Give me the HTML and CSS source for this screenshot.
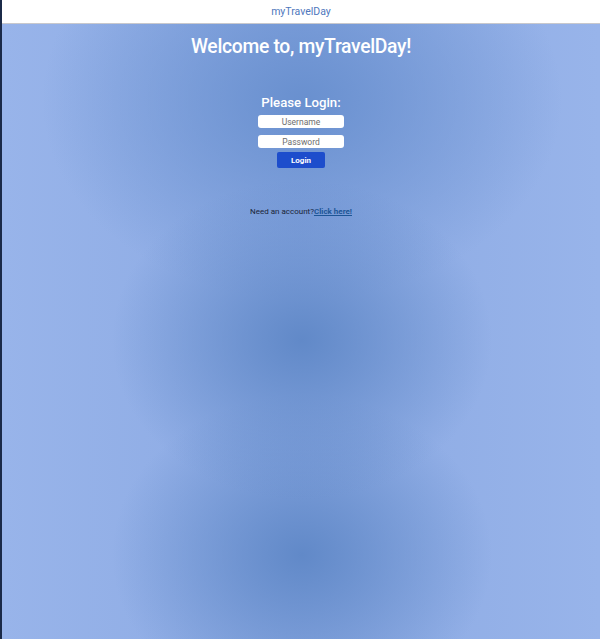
FILE: index.html
```html
<!DOCTYPE html>
<html>
<head>
<meta charset="utf-8">
<link rel="stylesheet" href="styles.css">
</head>
<body>
<div class="page">
  <header class="topbar"><span class="brand">myTravelDay</span></header>
  <main class="hero">
    <h1 class="title">Welcome to, myTravelDay!</h1>
    <form class="login">
      <h2 class="login-title">Please Login:</h2>
      <input class="field" type="text" placeholder="Username">
      <input class="field" type="password" placeholder="Password">
      <button class="btn" type="button">Login</button>
    </form>
    <p class="signup">Need an account?<a href="#" class="signup-link">Click here!</a></p>
  </main>
</div>
</body>
</html>
```
FILE: styles.css
```css
html, body {
  margin: 0;
  padding: 0;
  height: 100%;
}
body {
  font-family: Roboto, "Liberation Sans", sans-serif;
  background: #1b2a48;
}
.page {
  margin-left: 2px;
  height: 639px;
  display: flex;
  flex-direction: column;
  background-color: #98b4ea;
  background-image:
    radial-gradient(ellipse 190px 160px at 300px 340px, #6189c8 0%, rgba(97,137,200,0.6) 40%, rgba(152,180,234,0) 100%),
    radial-gradient(ellipse 190px 160px at 300px 555px, #6189c8 0%, rgba(97,137,200,0.6) 40%, rgba(152,180,234,0) 100%),
    radial-gradient(ellipse 260px 200px at 300px 100px, #6990cf 0%, rgba(105,144,207,0.6) 40%, rgba(152,180,234,0) 100%),
    linear-gradient(90deg, rgba(152,180,234,0) 0%, rgba(110,145,210,0.3) 50%, rgba(152,180,234,0) 100%);
  overflow: hidden;
}
.topbar {
  height: 23px;
  background: #ffffff;
  border-bottom: 1px solid #c8c8cc;
  display: flex;
  align-items: center;
  justify-content: center;
  margin-left: -2px;
  padding-left: 2px;
}
.brand {
  color: #4f78bd;
  font-size: 10.5px;
}
.hero {
  display: flex;
  flex-direction: column;
  align-items: center;
}
.title {
  margin: 11px 0 0;
  color: #ffffff;
  font-size: 19.3px;
  font-weight: 500;
  letter-spacing: -0.3px;
}
.login {
  display: flex;
  flex-direction: column;
  align-items: center;
  margin-top: 37px;
}
.login-title {
  margin: 0 0 5px;
  color: #ffffff;
  font-size: 13.2px;
  font-weight: 500;
}
.field {
  box-sizing: border-box;
  width: 86px;
  height: 13px;
  margin: 0 0 7px;
  padding: 0;
  border: none;
  border-radius: 3px;
  background: #ffffff;
  font-family: Roboto, "Liberation Sans", sans-serif;
  font-size: 8.5px;
  text-align: center;
  color: #555;
}
.field::placeholder {
  color: #6d6d6d;
}
.field + .field {
  margin-bottom: 4px;
}
.btn {
  box-sizing: border-box;
  width: 48px;
  height: 16px;
  padding: 0;
  border: none;
  border-radius: 2px;
  background: #1d4dcc;
  color: #ffffff;
  font-family: Roboto, "Liberation Sans", sans-serif;
  font-size: 8px;
  font-weight: 700;
}
.signup {
  margin: 39px 0 0;
  font-size: 8px;
  color: #1a2538;
}
.signup-link {
  color: #1d5696;
  font-weight: 700;
}
```
